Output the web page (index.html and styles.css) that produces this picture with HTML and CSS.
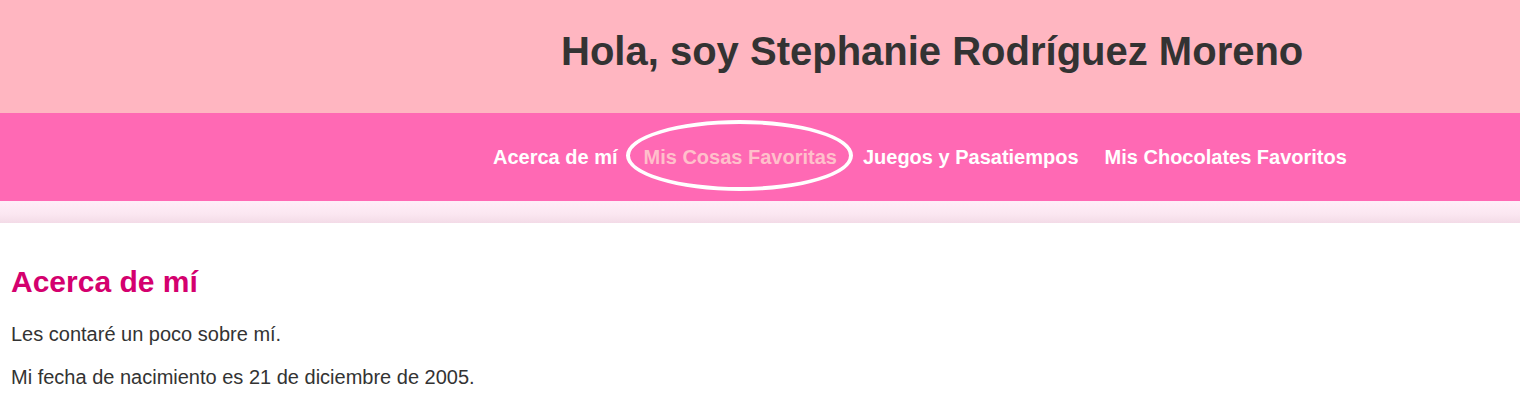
FILE: index.html
```html
<!DOCTYPE html>
<html lang="es">
<head>
<meta charset="utf-8">
<title>Stephanie Rodríguez Moreno</title>
<link rel="stylesheet" href="styles.css">
</head>
<body>
<header class="site-header">
  <h1 class="site-title">Hola, soy Stephanie Rodríguez Moreno</h1>
</header>
<nav class="site-nav">
  <ul class="nav-list">
    <li><a class="nav-link" href="#acerca">Acerca de mí</a></li>
    <li><a class="nav-link nav-link--active" href="#cosas">Mis Cosas Favoritas</a></li>
    <li><a class="nav-link" href="#juegos">Juegos y Pasatiempos</a></li>
    <li><a class="nav-link" href="#chocolates">Mis Chocolates Favoritos</a></li>
  </ul>
</nav>
<div class="nav-shade"></div>
<main class="content">
  <section class="section" id="acerca">
    <h2 class="section-title">Acerca de mí</h2>
    <p class="text">Les contaré un poco sobre mí.</p>
    <p class="text">Mi fecha de nacimiento es 21 de diciembre de 2005.</p>
  </section>
</main>
</body>
</html>
```

FILE: styles.css
```css
* { box-sizing: border-box; }
html, body { margin: 0; padding: 0; }
body {
  font-family: "Liberation Sans", Arial, sans-serif;
  color: #333333;
  background: #ffffff;
}
.site-header {
  background: #ffb6c1;
  height: 113px;
  display: flex;
  align-items: center;
  padding-left: 561px;
  padding-bottom: 10px;
}
.site-title {
  margin: 0;
  font-size: 40px;
  font-weight: bold;
  color: #333333;
}
.site-nav {
  background: #ff69b4;
  height: 88px;
  display: flex;
  align-items: center;
  padding-left: 480px;
}
.nav-list {
  list-style: none;
  margin: 0;
  padding: 0;
  display: flex;
}
.nav-link {
  display: block;
  position: relative;
  padding: 0 13px;
  font-size: 20px;
  font-weight: bold;
  color: #ffffff;
  text-decoration: none;
}
.nav-link--active { color: #ffc0cb; }
.nav-link--active::after {
  content: "";
  position: absolute;
  left: -5px;
  right: -3px;
  top: -26px;
  bottom: -22px;
  border: 4px solid #ffffff;
  border-radius: 50%;
}
.nav-shade {
  height: 22px;
  background: linear-gradient(#ffeef8, #fbe7f1 60%, #f3dbe7);
}
.content { padding: 0 11px; }
.section-title {
  margin: 42px 0 20px;
  font-size: 30px;
  font-weight: bold;
  color: #d4006e;
}
.text {
  margin: 0 0 13px;
  font-size: 20px;
  line-height: 30px;
}
```
